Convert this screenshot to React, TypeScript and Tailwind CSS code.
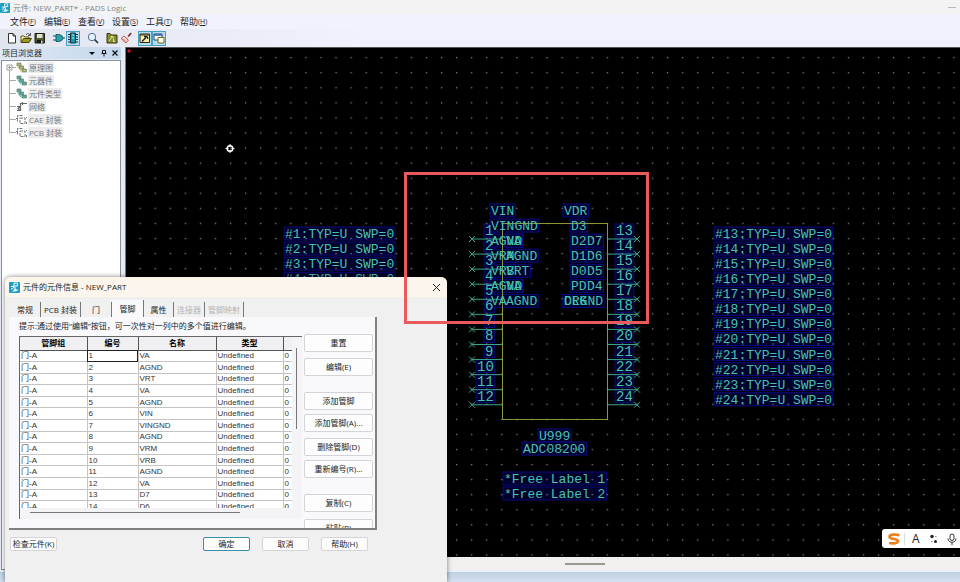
import type { ReactNode } from "react";

const menus = [
  ["文件", "F"],
  ["编辑", "E"],
  ["查看", "V"],
  ["设置", "S"],
  ["工具", "T"],
  ["帮助", "H"],
];

const pinNames = [
  "VA", "AGND", "VRT", "VA", "AGND", "VIN", "VINGND",
  "AGND", "VRM", "VRB", "AGND", "VA", "D7", "D6",
];

const tabs = [
  { label: "常规", width: "w-[31px]" },
  { label: "PCB 封装", width: "w-[40px]" },
  { label: "门", width: "w-[31px]" },
  { label: "管脚", width: "w-[32px]", active: true },
  { label: "属性", width: "w-[30px]" },
  { label: "连接器", width: "w-[31px]", disabled: true },
  { label: "管脚映射", width: "w-[39px]", disabled: true },
];

const PITCH = 15.07;

function ToolButton({ label, on, children }: { label: string; on?: boolean; children: ReactNode }) {
  return (
    <button
      aria-label={label}
      className={`flex h-[15px] w-[14px] shrink-0 items-center justify-center ${
        on ? "border border-[#4a9cc0] bg-[#b5dcf0]" : ""
      }`}
    >
      <svg viewBox="0 0 12 12" className="size-3 shrink-0">{children}</svg>
    </button>
  );
}

function Logo({ className }: { className: string }) {
  return (
    <svg viewBox="0 0 11 11" className={className}>
      <rect width="11" height="11" rx="1" fill="#1c9dc4" />
      <path d="M5 1h3.500v3H5zM2 4.500h3M2 7c2 0 3-1 3-3M6 5v2.500M5 8h4" fill="none" stroke="#fff" strokeWidth="1" />
      <path d="M1 9.500c2 0 4-.5 4-2.500h2.500v2.500z" fill="#d9f3fa" />
    </svg>
  );
}

function Toolbar() {
  return (
    <div className="flex h-[18px] shrink-0 items-center bg-linear-to-r from-[#e2e5ee] to-[#f0f3fd] to-40% pl-[5px]">
      <ToolButton label="新建">
        <path d="M2.500 1.500h4.500l2.500 2.500v7h-7zM7 1.500v2.500h2.500" fill="#fff" stroke="#333" />
      </ToolButton>
      <ToolButton label="打开">
        <path d="M1 10V4h3l1 1h4v2" fill="#fff799" stroke="#55551a" />
        <path d="M1 10.500l2.500-4h8l-2.500 4z" fill="#9a9a28" stroke="#44440c" />
        <path d="M6 2.500c2-1.500 3-1 4 .5M10.500 1v2.500H8" fill="none" stroke="#333" strokeWidth=".8" />
      </ToolButton>
      <ToolButton label="保存">
        <path d="M1 1.500h9.500V11H1z" fill="#4d552b" stroke="#1c2012" />
        <path d="M3 2h5.500v4H3z" fill="#dfe2d4" />
        <path d="M3 8h6v3H3z" fill="#151810" />
        <path d="M7 8.500h1.500V11H7z" fill="#ddd" />
      </ToolButton>
      <div className="w-[5px]" />
      <ToolButton label="添加元件">
        <path d="M0 4h3M0 8h3M10 6h2" stroke="#174c50" />
        <path d="M3 2.500h2.500q4 .3 4.500 3.500-.5 3.200-4.500 3.500H3z" fill="#28a5b0" stroke="#165b60" />
      </ToolButton>
      <ToolButton label="元件编辑" on>
        <path d="M3.500 1h5v10h-5z" fill="#1597ad" stroke="#17323a" />
        <path d="M1 2.500h2.500M1 5h2.500M1 7.500h2.500M1 10h2.500M8.500 2.500H11M8.500 5H11M8.500 7.500H11M8.500 10H11" stroke="#17323a" />
        <path d="M5 3h2M5 6h2" stroke="#c8f1fa" />
      </ToolButton>
      <div className="w-[6px]" />
      <ToolButton label="缩放">
        <circle cx="5" cy="5" r="3.700" fill="#e3f6ff" stroke="#52718c" />
        <path d="M7.700 7.700l3.300 3.300" stroke="#26384c" strokeWidth="1.700" />
      </ToolButton>
      <div className="w-[5px]" />
      <ToolButton label="图层">
        <path d="M1 1.500h3l1 1.500h6v8H1z" fill="#888c2c" stroke="#33360e" />
        <path d="M3 9l3-4M5 4.500h2v2M7.500 7v2.500H9" fill="none" stroke="#e9ee96" />
      </ToolButton>
      <ToolButton label="刷新">
        <path d="M7.500 4l3-3.500 1.300 1.300-3 3.200z" fill="#7f2f2f" />
        <path d="M4 4l4.500 4L6 11 1 6.500z" fill="#f8e4df" stroke="#c55a50" />
        <path d="M3 6.500l3 3M5 5l3 3" stroke="#d65d50" />
      </ToolButton>
      <div className="w-[5px]" />
      <ToolButton label="选项" on>
        <path d="M1 2h9.500v8.500H1z" fill="#f8efaa" stroke="#2a2a18" />
        <path d="M1 3h9.500" stroke="#2a2a18" />
        <path d="M3 9.500l4-4M5 4.500l3 .2 1 2" fill="none" stroke="#222" strokeWidth="1.400" />
      </ToolButton>
      <ToolButton label="项目浏览器" on>
        <path d="M1 2h8v6H1z" fill="#fff" stroke="#23406e" />
        <path d="M1 3h8" stroke="#2a62a8" strokeWidth="1.500" />
        <path d="M5 5.500h6V11H5z" fill="#ffffe8" stroke="#6a6a22" />
      </ToolButton>
    </div>
  );
}

const tree = ["原理图", "元器件", "元件类型", "网络", "CAE 封装", "PCB 封装"];

function TreeIcon({ index }: { index: number }) {
  if (index === 3) {
    return (
      <svg viewBox="0 0 11 11" className="size-[11px]">
        <path d="M4.500 9V2.500H11M1 5.500h3M1 9.500h3l-2-2 2-2M6.500 1v3" fill="none" stroke="#666" strokeWidth="1.200" />
      </svg>
    );
  }
  if (index > 3) {
    return (
      <svg viewBox="0 0 11 11" className="size-[11px]">
        <path d="M1.500 7.500v-6h6M0 4.500h2M4 4h5v5.500H4zM10.500 3v1M10.500 8v2" fill="none" stroke="#777" strokeDasharray="3 1" />
      </svg>
    );
  }
  const tint = index === 0 ? "#b9b76a" : "#4fae9c";
  return (
    <svg viewBox="0 0 11 11" className="size-[11px]">
      <path d="M1 1h4v3H1zM3.500 4h4v3h-4zM6 7h4.500v3H6z" fill={tint} stroke="#6b7a70" strokeWidth=".7" />
      <path d="M2 5l3 4" stroke={tint} />
    </svg>
  );
}

function ProjectExplorer() {
  return (
    <aside className="flex w-[126px] shrink-0 flex-col border-r border-[#777d88] bg-[#e6eaf4] pr-[4px]">
      <div className="flex h-3 items-center bg-linear-to-r from-[#dfe9f5] to-[#c3d7ec] pl-[2px] pr-[2px] text-[8px] text-[#1b1f2a]">
        <span className="flex-1">项目浏览器</span>
        <button aria-label="菜单" className="mr-1">
          <svg viewBox="0 0 8 8" className="size-2"><path d="M1 3h6L4 6z" fill="#111" /></svg>
        </button>
        <button aria-label="固定" className="mr-[3px]">
          <svg viewBox="0 0 8 8" className="size-2"><path d="M2.500 1.500h3v3h-3zM1.500 4.500h5M4 5v2.500" fill="none" stroke="#111" /></svg>
        </button>
        <button aria-label="关闭">
          <svg viewBox="0 0 8 8" className="size-2"><path d="M1.500 1.500l5 5M6.500 1.500l-5 5" stroke="#111" strokeWidth="1.300" /></svg>
        </button>
      </div>
      <ul className="ml-px mt-px flex-1 border border-[#8b9099] bg-white text-[8px] text-[#777]">
        {tree.map((item, i) => (
          <li key={item} className="flex h-[13px] items-center pl-1">
            <svg viewBox="0 0 10 13" className="h-[13px] w-[10px]">
              <path d={i === 5 ? "M3.500 0v6.500H10" : i === 0 ? "M3.500 6.500V13M4 6.500h6" : "M3.500 0v13M4 6.500h6"} fill="none" stroke="#aaa" />
              {i === 0 && <path d="M1 4h5v5H1zM2 6.500h3M3.500 5v3" fill="#fff" stroke="#888" strokeWidth=".8" />}
            </svg>
            <TreeIcon index={i} />
            <span className="ml-px bg-[#ededed] px-px leading-[11px]">{item}</span>
          </li>
        ))}
      </ul>
    </aside>
  );
}

type Label = { x: number; y: number; text: string; size?: number };

const innerLabels: [number, number, string][] = [
  [365, 0, "VIN"], [365, 1, "VINGND"],
  [365, 2, "AGND"], [380, 2, "VA"],
  [365, 3, "VRM"], [380, 3, "AGND"],
  [365, 4, "VRB"], [380, 4, "VRT"],
  [365, 5, "AGND"], [380, 5, "VA"],
  [365, 6, "VA"], [380, 6, "AGND"],
  [438, 0, "VDR"], [445, 1, "D3"],
  [445, 2, "D2"], [461, 2, "D7"],
  [445, 3, "D1"], [461, 3, "D6"],
  [445, 4, "D0"], [461, 4, "D5"],
  [445, 5, "PD"], [461, 5, "D4"],
  [438, 6, "CLK"], [438, 6, "DRGND"],
];

const rows = Array.from({ length: 12 }, (_, i) => i);

const labels: Label[] = [
  ...rows.flatMap((i) => {
    const y = 190 + i * PITCH;
    const left = String(i + 1);
    return [
      { x: 367 - left.length * 8, y: y - 3, text: left, size: 14 },
      { x: 490, y: y - 3, text: String(i + 13), size: 14 },
      { x: 159, y, text: `#${i + 1}:TYP=U SWP=0` },
      { x: 589, y, text: `#${i + 13}:TYP=U SWP=0` },
    ];
  }),
  ...innerLabels.map(([x, row, text]) => ({ x, y: 167 + row * PITCH, text })),
  { x: 413, y: 392, text: "U999" },
  { x: 397, y: 405, text: "ADC08200" },
  { x: 378, y: 435, text: "*Free Label 1" },
  { x: 378, y: 450, text: "*Free Label 2" },
];

function Schematic() {
  return (
    <svg className="h-full w-full bg-black font-['Liberation_Mono',monospace]">
      <defs>
        <pattern id="grid" x="7" y="2.500" width={PITCH} height={PITCH} patternUnits="userSpaceOnUse">
          <rect x="6.500" y="6.500" width="1.300" height="1.300" fill="#85857c" />
        </pattern>
      </defs>
      {/* pick boxes stay under every line and glyph */}
      {labels.map(({ x, y, text, size = 13 }, i) => (
        <rect
          key={i}
          x={x - 1}
          y={y - 11}
          width={text.length * size * 0.6 + 2}
          height="13"
          fill="#00002c"
          stroke="#0a0a8c"
          strokeWidth=".9"
        />
      ))}
      <rect width="100%" height="100%" fill="url(#grid)" />
      <circle cx="3" cy="3" r="1.700" fill="#c9141c" />
      <g stroke="#fff" fill="none">
        <circle cx="104" cy="100.500" r="2.800" strokeWidth="1.500" />
        <path d="M104 96v3M104 102v3M99.500 100.500h3M105.500 100.500h3" />
      </g>
      <rect x="376.500" y="175.500" width="105" height="196" fill="none" stroke="#8f9438" />
      {rows.map((i) => {
        const y = 191 + i * PITCH;
        return (
          <g key={i} stroke="#3aa48c">
            <path d={`M346 ${y}h30M482 ${y}h30`} />
            <path d={`M343 ${y - 3}l6 6m0-6l-6 6M508 ${y - 3}l6 6m0-6l-6 6`} />
          </g>
        );
      })}
      {labels.map(({ x, y, text, size = 13 }, i) => (
        <text key={i} x={x} y={y} fontSize={size} fill="#45c4b0">{text}</text>
      ))}
    </svg>
  );
}

function DialogButton({ children, primary, className = "" }: { children: ReactNode; primary?: boolean; className?: string }) {
  return (
    <button
      className={`shrink-0 whitespace-nowrap rounded-[2px] border bg-[#fdfdfd] text-[8px] text-[#222] ${
        primary ? "border-[#3c8fa8]" : "border-[#d4d4d8]"
      } ${className}`}
    >
      {children}
    </button>
  );
}

function PinTable() {
  return (
    <div className="h-[183px] w-[283px] border-l border-t border-[#666] bg-[#f4f4f7]">
      <div className="flex h-[171px]">
        <div className="overflow-hidden">
          <table className="h-[176px] w-[272px] table-fixed border-collapse bg-white font-['Liberation_Sans','Noto_Sans_CJK_SC',sans-serif] text-[8px] leading-[9px] text-[#333]">
            <thead>
              <tr className="h-[13px] border-b border-[#555] bg-[#f0f0f3] text-black">
                <th className="w-[67px] border-r border-[#555] p-0">管脚组</th>
                <th className="w-[51px] border-r border-[#555] p-0">编号</th>
                <th className="w-[78px] border-r border-[#555] p-0">名称</th>
                <th className="w-[67px] border-r border-[#555] p-0">类型</th>
                <th className="p-0" />
              </tr>
            </thead>
            <tbody>
              {pinNames.map((name, i) => (
                <tr key={i} className="border-b border-[#c4c4c4]">
                  <td className="border-r border-[#c4c4c4] px-px py-0">门-A</td>
                  <td className={`border-r border-[#c4c4c4] px-px py-0 ${i === 0 ? "outline outline-[#222] -outline-offset-1" : ""}`}>{i + 1}</td>
                  <td className="border-r border-[#c4c4c4] px-px py-0">{name}</td>
                  <td className="border-r border-[#c4c4c4] px-px py-0">Undefined</td>
                  <td className="px-px py-0">0</td>
                </tr>
              ))}
            </tbody>
          </table>
        </div>
        <div className="ml-1 mt-[11px] h-[81px] w-px bg-[#777]" />
      </div>
      <div className="ml-[10px] mt-1 h-px w-[210px] bg-[#777]" />
    </div>
  );
}

function PartDialog() {
  return (
    <section role="dialog" aria-label="元件的元件信息" className="absolute bottom-0 left-[5px] top-[277px] flex w-[442px] flex-col overflow-hidden rounded-t-[6px] bg-[#f0f0f0] text-[8px] shadow-[0_0_5px_rgba(0,0,0,0.5)]">
      <header className="flex h-5 shrink-0 items-center bg-[#fbf5eb] pl-1 pr-[6px] text-[#222]">
        <Logo className="size-[11px]" />
        <h2 className="ml-[3px] flex-1">元件的元件信息 - NEW_PART</h2>
        <button aria-label="关闭">
          <svg viewBox="0 0 9 9" className="size-[9px]"><path d="M1 1l7 7M8 1l-7 7" stroke="#222" /></svg>
        </button>
      </header>
      <div role="tablist" className="flex h-5 shrink-0 items-end pl-[5px]">
        {tabs.map((tab) => (
          <button
            key={tab.label}
            role="tab"
            aria-selected={!!tab.active}
            disabled={tab.disabled}
            className={`flex shrink-0 items-center justify-center whitespace-nowrap border-r border-[#777] ${tab.width} ${
              tab.active ? "h-[17px] bg-[#f9f9fc]" : "h-[15px]"
            } ${tab.disabled ? "text-[#b4b4b4]" : "text-[#222]"}`}
          >
            {tab.label}
          </button>
        ))}
      </div>
      <div className="ml-1 h-[213px] w-[368px] shrink-0 overflow-hidden border-b-2 border-r-2 border-[#808080] bg-[#f9f9fc] pl-[10px]">
        <div className="flex">
          <div>
            <p className="flex h-[19px] items-center whitespace-nowrap pb-[2px] text-[#222]">
              提示:通过使用“编辑”按钮，可一次性对一列中的多个值进行编辑。
            </p>
            <PinTable />
          </div>
          <div className="ml-[2px] mt-[17px] flex w-[69px] flex-col">
            <DialogButton className="mb-[6px] h-[18px]">重置</DialogButton>
            <DialogButton className="mb-4 h-[18px]">编辑(E)</DialogButton>
            <DialogButton className="mb-1 h-[18px]">添加管脚</DialogButton>
            <DialogButton className="mb-[6px] h-[18px]">添加管脚(A)...</DialogButton>
            <DialogButton className="mb-1 h-[18px]">删除管脚(D)</DialogButton>
            <DialogButton className="mb-4 h-[18px]">重新编号(R)...</DialogButton>
            <DialogButton className="mb-[7px] h-[18px]">复制(C)</DialogButton>
            <DialogButton className="h-[18px]">粘贴(P)</DialogButton>
          </div>
        </div>
      </div>
      <footer className="flex pl-[5px] pt-[7px]">
        <DialogButton className="mr-[146px] h-[14px] w-[47px]">检查元件(K)</DialogButton>
        <DialogButton primary className="mr-3 h-[14px] w-[47px]">确定</DialogButton>
        <DialogButton className="mr-3 h-[14px] w-[47px]">取消</DialogButton>
        <DialogButton className="h-[14px] w-[47px]">帮助(H)</DialogButton>
      </footer>
    </section>
  );
}

function InputMethodBar() {
  return (
    <div className="absolute bottom-[34px] right-0 flex h-[19px] w-[78px] items-center rounded-l-[3px] bg-white pl-[5px]">
      <svg viewBox="0 0 14 14" className="size-[14px]">
        <path d="M12.500 3.200C8 2 2.500 2.300 2.500 4.700c0 3 8.500 1.500 8.500 4.300 0 2.500-5 2.700-9 2" fill="none" stroke="#ee7d1a" strokeWidth="2.600" />
      </svg>
      <div className="ml-[3px] h-3 w-px bg-[#ddd]" />
      <span className="ml-[7px] text-[12px] leading-none text-[#222]">A</span>
      <svg viewBox="0 0 10 12" className="ml-[9px] h-3 w-[10px]">
        <circle cx="3" cy="3.500" r="1.700" fill="#222" />
        <circle cx="6.500" cy="8.500" r="1.500" fill="#222" />
        <path d="M6.500 3.500h.8M2.500 8.500h.8" stroke="#222" />
      </svg>
      <svg viewBox="0 0 10 12" className="ml-2 h-3 w-[10px]">
        <rect x="3" y="1" width="4" height="6.500" rx="2" fill="none" stroke="#333" />
        <path d="M1 5.500c0 5 8 5 8 0M5 9.500V12" fill="none" stroke="#333" />
      </svg>
    </div>
  );
}

export default function App() {
  return (
    <div className="relative flex h-screen flex-col overflow-hidden bg-[#f0f3fd] font-['Open_Sans','Noto_Sans_CJK_SC',sans-serif]">
      <header className="flex h-[15px] shrink-0 items-center bg-[#f3f3f3] pr-1 text-[8px] text-[#858585]">
        <Logo className="size-[10px]" />
        <h1 className="ml-[3px] flex-1">元件: NEW_PART* - PADS Logic</h1>
        <button aria-label="最小化" className="flex size-2 items-center">
          <span className="h-px w-full bg-[#bbb]" />
        </button>
      </header>
      <nav className="flex h-[14px] shrink-0 items-center gap-[10px] pl-[10px] text-[9px] text-[#222]">
        {menus.map(([name, key]) => (
          <button key={key} className="flex w-6 items-center whitespace-nowrap">
            {name}
            <span className="text-[7px]">(<u>{key}</u>)</span>
          </button>
        ))}
      </nav>
      <Toolbar />
      <main className="flex min-h-0 flex-1">
        <ProjectExplorer />
        <div className="flex min-w-0 flex-1 flex-col">
          <div className="min-h-0 flex-1 border-t border-[#555]">
            <Schematic />
          </div>
          <div className="flex h-[13px] shrink-0 items-center bg-[#f2f0ef] pl-[439px]">
            <div className="h-[2px] w-10 bg-[#999990]" />
          </div>
        </div>
      </main>
      <footer className="h-3 shrink-0 border-t-2 border-[#e8f2fb] bg-linear-to-b from-[#bfd0e2] to-[#d3e1f1]" />
      <PartDialog />
      <div className="pointer-events-none absolute left-[404px] top-[172px] h-[152px] w-[245px] border-3 border-[#ea5a5c]" />
      <InputMethodBar />
    </div>
  );
}
